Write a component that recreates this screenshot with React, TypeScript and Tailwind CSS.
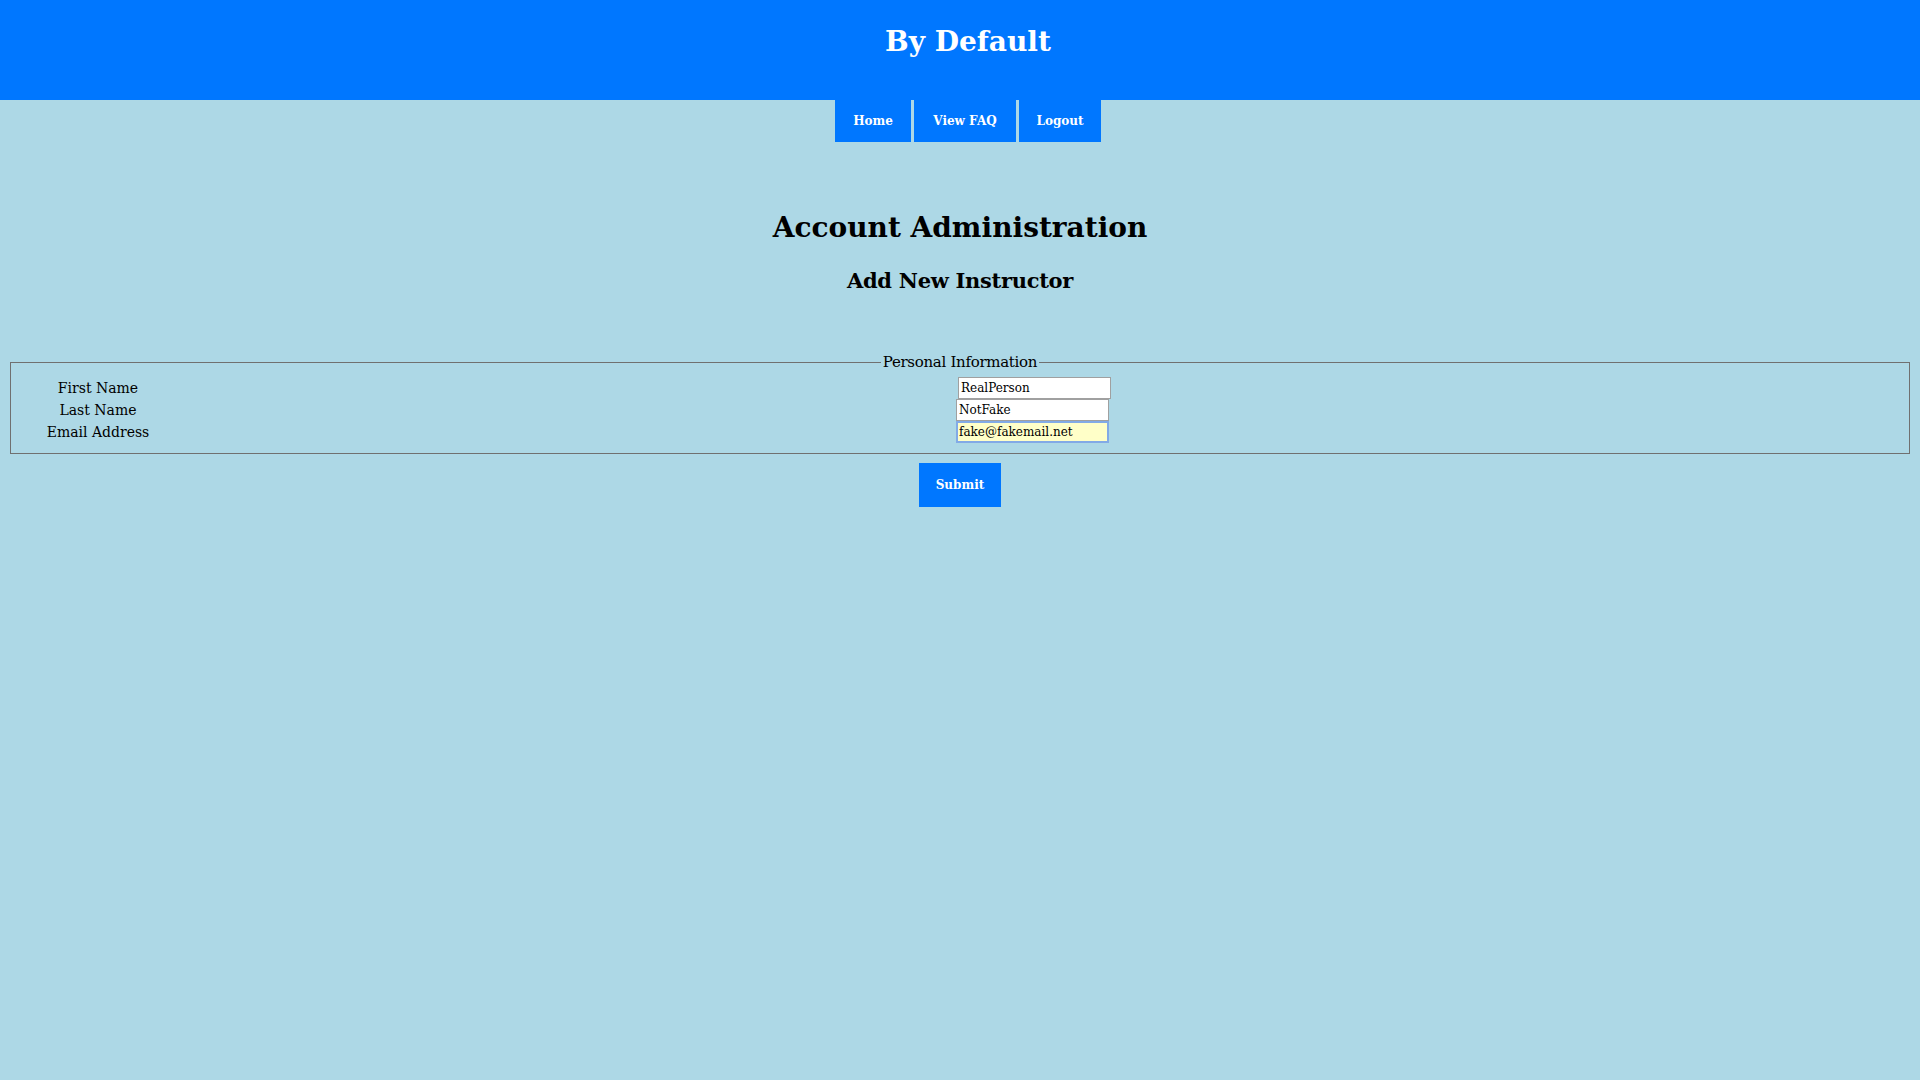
import React from "react";

const serif = { fontFamily: '"DejaVu Serif", "Liberation Serif", serif' };

export default function App() {
  return (
    <div className="min-h-screen w-full bg-[#add8e6] text-black" style={serif}>
      <header className="h-[100px] bg-[#0077ff] pl-[16px] pt-[27px]">
        <h1 className="text-center text-[28px] font-bold leading-[30px] text-white">By Default</h1>
      </header>
      <nav className="flex justify-center gap-[3px] pl-[16px]">
        <a className="flex h-[42px] w-[76px] items-center justify-center bg-[#0077ff] text-[12px] font-bold text-white">Home</a>
        <a className="flex h-[42px] w-[102px] items-center justify-center bg-[#0077ff] text-[12px] font-bold text-white">View FAQ</a>
        <a className="flex h-[42px] w-[82px] items-center justify-center bg-[#0077ff] text-[12px] font-bold text-white">Logout</a>
      </nav>
      <h2 className="mt-[72px] text-center text-[28px] font-bold leading-none">Account Administration</h2>
      <h3 className="mt-[28px] text-center text-[21px] font-bold leading-[22px] tracking-[-0.3px]">Add New Instructor</h3>
      <form className="mt-[60px] flex flex-col">
        <fieldset className="mx-[10px] border border-[#707070] px-[12px] pb-[10px] pt-[5px]">
          <legend className="mx-auto px-[2px] text-[15px] leading-[20px] tracking-[-0.3px]">Personal Information</legend>
          <div className="flex">
            <div className="flex w-[150px] flex-col text-[14px] leading-[22px]">
              <span className="text-center">First Name</span>
              <span className="text-center">Last Name</span>
              <span className="text-center">Email Address</span>
            </div>
            <div className="ml-[783px] flex flex-col">
              <input
                className="ml-[2px] h-[22px] w-[153px] border border-[#a0a0a0] bg-white px-[2px] text-[12px] outline-none"
                style={serif}
                defaultValue="RealPerson"
              />
              <input
                className="h-[22px] w-[153px] border border-[#a0a0a0] bg-white px-[2px] text-[12px] outline-none"
                style={serif}
                defaultValue="NotFake"
              />
              <input
                className="h-[22px] w-[153px] border-2 border-[#82aae6] bg-[#ffffc8] px-[1px] text-[12px] outline-none"
                style={serif}
                defaultValue="fake@fakemail.net"
              />
            </div>
          </div>
        </fieldset>
        <div className="mt-[9px] flex justify-center">
          <button
            type="button"
            className="h-[44px] w-[82px] bg-[#0077ff] text-[12px] font-bold text-white"
            style={serif}
          >
            Submit
          </button>
        </div>
      </form>
    </div>
  );
}
